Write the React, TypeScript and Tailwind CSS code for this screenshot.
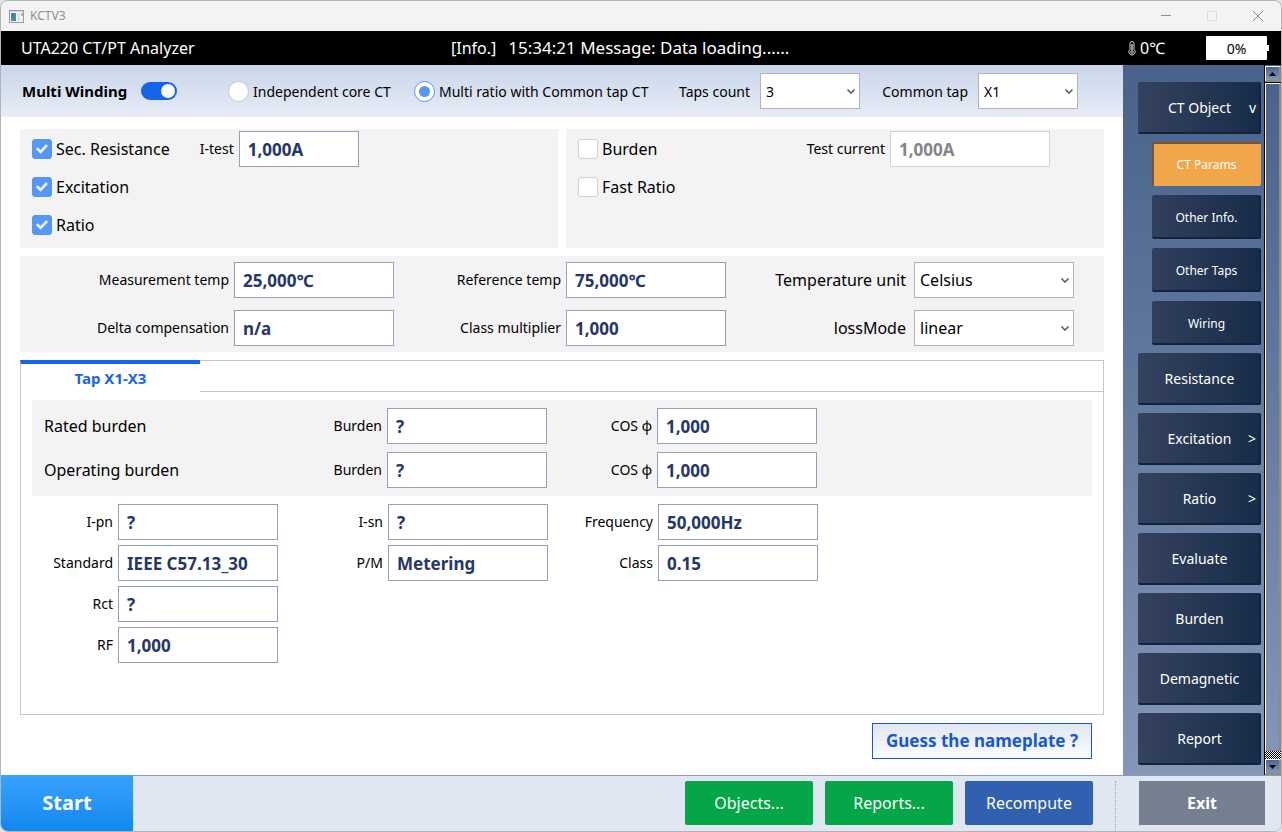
import { useState } from "react";
import clsx from "clsx";

type MenuItem = { label: string; mark?: string; children?: string[] };

const menu: MenuItem[] = [
    { label: "CT Object", mark: "v", children: ["CT Params", "Other Info.", "Other Taps", "Wiring"] },
    { label: "Resistance" },
    { label: "Excitation", mark: ">" },
    { label: "Ratio", mark: ">" },
    { label: "Evaluate" },
    { label: "Burden" },
    { label: "Demagnetic" },
    { label: "Report" },
];

const nameplate = [
    ["I-pn", "?"], ["I-sn", "?"], ["Frequency", "50,000Hz"],
    ["Standard", "IEEE C57.13_30"], ["P/M", "Metering"], ["Class", "0.15"],
    ["Rct", "?"], null, null,
    ["RF", "1,000"], null, null,
];

function Field({ label, value, disabled = false, narrow = false }: {
    label: string,
    value: string,
    disabled?: boolean,
    narrow?: boolean
}) {
    return (
        <label className="flex items-center justify-end gap-[5px] text-[14px] whitespace-nowrap">
            <span className="pb-[2px]">{label}</span>
            <input
                type="text"
                defaultValue={value}
                disabled={disabled}
                className={clsx(
                    "h-9 border bg-white px-2 text-[17px] font-bold",
                    narrow ? "w-[120px]" : "w-40",
                    disabled ? "border-[#d3d5de] text-[#858585]" : "border-[#93a0bb] text-[#24376b]"
                )}
            />
        </label>
    );
}

function Dropdown({ label, options, big = false }: { label: string, options: string[], big?: boolean }) {
    return (
        <label className={clsx("flex items-center justify-end whitespace-nowrap", big ? "gap-2 text-[16px]" : "gap-[10px] text-[14px]")}>
            {label}
            <span className="relative">
                <select className={clsx("block h-9 appearance-none border border-[#b2b2b2] bg-white px-[5px]", big ? "w-40" : "w-[100px]")}>
                    {options.map(o => <option key={o}>{o}</option>)}
                </select>
                <svg className="pointer-events-none absolute top-[15px] right-1 h-2 w-[10px]" viewBox="0 0 10 8" fill="none" stroke="#53657f" strokeWidth="1.7">
                    <path d="M1.5 1.5 L5 5 L8.5 1.5" />
                </svg>
            </span>
        </label>
    );
}

function Check({ label, checked = false }: { label: string, checked?: boolean }) {
    return (
        <label className="flex h-9 items-center gap-1 text-[16px]">
            <span className="relative">
                <input
                    type="checkbox"
                    defaultChecked={checked}
                    className="peer block size-5 appearance-none rounded-[3px] border border-[#cfcfcf] bg-white checked:border-[#5597f7] checked:bg-[#5597f7]"
                />
                <svg className="pointer-events-none absolute inset-0 hidden size-5 peer-checked:block" viewBox="0 0 20 20" fill="none" stroke="#eaf2ff" strokeWidth="2.6">
                    <path d="M4.8 9.2 L8.6 12.8 L15 6" />
                </svg>
            </span>
            {label}
        </label>
    );
}

function Radio({ label, checked = false }: { label: string, checked?: boolean }) {
    return (
        <label className="flex items-center gap-1 text-[14px] whitespace-nowrap">
            <input
                type="radio"
                name="core"
                defaultChecked={checked}
                className="grid size-[21px] appearance-none place-items-center rounded-full border border-[#c6c6c6] bg-white before:size-[11px] before:rounded-full checked:border-[#5597f7] checked:before:bg-[#5597f7]"
            />
            {label}
        </label>
    );
}

function TitleBar() {
    return (
        <div className="flex h-[30px] items-center bg-[#f3f3f3] pl-2 text-[12px] text-[#8f8f8f]">
            <svg className="mr-[6px] h-[13px] w-[15px]" viewBox="0 0 15 13">
                <rect x="0.5" y="0.5" width="14" height="12" fill="#f4f4f4" stroke="#989da3" />
                <rect x="1" y="1" width="13" height="1" fill="#cfd5da" />
                <rect x="2" y="3" width="5" height="8" fill="#4c8f86" />
                <rect x="2" y="3" width="3" height="4" fill="#4a7f9c" />
                <rect x="8" y="3" width="3" height="8" fill="#dfe3e5" />
                <rect x="12" y="3" width="2" height="3" fill="#8fc8a8" />
            </svg>
            KCTV3
            <div className="ml-auto flex gap-9 pr-[18px]">
                <button aria-label="Minimize">
                    <svg className="size-[10px]" viewBox="0 0 10 10" stroke="#8f8f8f"><path d="M0 4.5 H10" /></svg>
                </button>
                <button aria-label="Maximize" disabled>
                    <svg className="size-[10px]" viewBox="0 0 10 10" fill="none" stroke="#dcdcdc"><rect x="0.5" y="0.5" width="9" height="9" /></svg>
                </button>
                <button aria-label="Close">
                    <svg className="size-[10px]" viewBox="0 0 10 10" stroke="#8f8f8f"><path d="M0 0 L10 10 M10 0 L0 10" /></svg>
                </button>
            </div>
        </div>
    );
}

function StatusBar() {
    return (
        <header className="flex h-[34px] items-center bg-black pl-5 text-[16px] text-white">
            <h1 className="w-[430px]">UTA220 CT/PT Analyzer</h1>
            <p className="flex flex-1 items-center gap-3"><span>[Info.]</span><span className="text-[17px]">15:34:21 Message: Data loading......</span></p>
            <div className="flex w-[78px] items-center gap-1">
                <svg className="h-[15px] w-2" viewBox="0 0 8 15" fill="none" stroke="#d5d5d5">
                    <path d="M2 8.3 V2.5 a2 2 0 0 1 4 0 V8.3 a3.2 3.2 0 1 1 -4 0 Z" />
                    <path d="M4 3 V9" strokeWidth="1.4" />
                    <circle cx="4" cy="11" r="1.3" />
                </svg>
                0℃
            </div>
            <div className="flex items-center pr-3">
                <div className="h-6 w-[61px] rounded-[1px] bg-white pt-px text-center text-[14px] leading-6 text-black">0%</div>
                <div className="h-[6px] w-[2px] bg-white" />
            </div>
        </header>
    );
}

function Sidebar() {
    const [active, setActive] = useState("CT Params");

    return (
        <nav className="flex flex-1 flex-col gap-2 pt-[17px] pr-[3px] pb-[10px] pl-[15px] text-white">
            {menu.map(item => (
                <div key={item.label} className="flex flex-col gap-2">
                    <button className="relative h-[52px] rounded-[2px] border-r-2 border-b-2 border-[#14233c] bg-linear-to-r from-[#35425f] to-[#172c49] pl-[2px] text-[14px]">
                        {item.label}
                        {item.mark && <span className="absolute right-[3px]">{item.mark}</span>}
                    </button>
                    {item.children && (
                        <div className="flex flex-col gap-[9px] pl-[14px]">
                            {item.children.map(c => (
                                <button
                                    key={c}
                                    onClick={() => setActive(c)}
                                    className={clsx(
                                        "h-11 rounded-[2px] text-[12px]",
                                        c === active
                                            ? "border-t-2 border-l-2 border-[#80531f] bg-[#f1a64a] pr-[2px]"
                                            : "border-r-2 border-b-2 border-[#14233c] bg-linear-to-r from-[#313f5d] to-[#172c49] pt-1 pl-[2px]"
                                    )}
                                >
                                    {c}
                                </button>
                            ))}
                        </div>
                    )}
                </div>
            ))}
        </nav>
    );
}

function ScrollBar() {
    const btn = "flex h-4 items-center justify-center border-t border-l border-t-white border-l-white border-r-2 border-b-2 border-r-[#8b8b8b] border-b-[#8b8b8b] bg-linear-to-b from-[#4a6690] to-[#8497b8]";
    return (
        <div className="flex w-[17px] flex-col border-l border-black pt-px">
            <button aria-label="Scroll up" className={btn}>
                <svg className="h-1 w-[7px]" viewBox="0 0 7 4"><path d="M0 4 L3.5 0 L7 4 Z" /></svg>
            </button>
            <div className="h-px bg-black" />
            <div className="flex-1 border-t border-l border-r-2 border-b border-t-white border-l-white border-r-[#8b8b8b] border-b-[#8b8b8b]" />
            <div className="h-2 bg-[repeating-conic-gradient(#000_0_25%,#fff_0_50%)] bg-[length:2px_2px]" />
            <button aria-label="Scroll down" className={btn}>
                <svg className="h-1 w-[7px]" viewBox="0 0 7 4"><path d="M0 0 L3.5 4 L7 0 Z" /></svg>
            </button>
        </div>
    );
}

export default function App() {
    return (
        <div className="bg-[#e4e4e4] font-['Noto_Sans',sans-serif] text-black">
            <div className="flex min-h-screen flex-col overflow-hidden rounded-lg border border-[#b4b4b4] bg-white">
                <TitleBar />
                <StatusBar />

                <div className="flex flex-1">
                    <main className="flex flex-1 flex-col">
                        <div className="flex h-[52px] items-center bg-linear-to-b from-[#c8d5ea] to-[#e8edf7] pl-[21px]">
                            <label className="flex w-[206px] items-center gap-[14px] text-[15px] font-bold">
                                Multi Winding
                                <input
                                    type="checkbox"
                                    role="switch"
                                    defaultChecked
                                    className="flex h-[18px] w-9 appearance-none items-center rounded-full bg-gray-400 px-[2px] before:size-[14px] before:rounded-full before:bg-white checked:justify-end checked:bg-[#1764ec]"
                                />
                            </label>
                            <div className="grid grid-cols-[166px_241px_185px_198px] gap-5">
                                <Radio label="Independent core CT" />
                                <Radio label="Multi ratio with Common tap CT" checked />
                                <Dropdown label="Taps count" options={["3", "2", "4", "5"]} />
                                <Dropdown label="Common tap" options={["X1", "X2", "X3"]} />
                            </div>
                        </div>

                        <div className="flex flex-1 flex-col gap-2 px-[19px] pt-3 pb-4">
                            <div className="grid grid-cols-2 gap-2">
                                <section className="flex gap-[30px] bg-[#f3f3f3] pt-[2px] pb-[5px] pl-3">
                                    <div className="flex flex-col gap-[2px]">
                                        <Check label="Sec. Resistance" checked />
                                        <Check label="Excitation" checked />
                                        <Check label="Ratio" checked />
                                    </div>
                                    <div><Field label="I-test" value="1,000A" narrow /></div>
                                </section>
                                <section className="flex justify-between bg-[#f3f3f3] pt-[2px] pr-[54px] pb-[5px] pl-3">
                                    <div className="flex flex-col gap-[2px]">
                                        <Check label="Burden" />
                                        <Check label="Fast Ratio" />
                                    </div>
                                    <div><Field label="Test current" value="1,000A" disabled /></div>
                                </section>
                            </div>

                            <section className="grid grid-cols-[374fr_332fr_348fr] gap-y-3 bg-[#f3f3f3] py-[6px] pr-[30px]">
                                <Field label="Measurement temp" value="25,000℃" />
                                <Field label="Reference temp" value="75,000℃" />
                                <Dropdown label="Temperature unit" options={["Celsius", "Fahrenheit"]} big />
                                <Field label="Delta compensation" value="n/a" />
                                <Field label="Class multiplier" value="1,000" />
                                <Dropdown label="lossMode" options={["linear", "non-linear"]} big />
                            </section>

                            <section className="flex-1 border-x border-b border-[#c6c6c6]">
                                <div className="flex h-8">
                                    <button className="-ml-px w-[180px] border-t-4 border-l border-t-[#1764ec] border-l-[#c6c6c6] text-[15px] font-bold text-[#1764ec]">
                                        Tap X1-X3
                                    </button>
                                    <div className="flex-1 border-y border-[#c6c6c6]" />
                                </div>
                                <div className="mx-[11px] mt-2 flex flex-col gap-2 bg-[#f3f3f3] py-2 pl-3">
                                    {["Rated burden", "Operating burden"].map(name => (
                                        <div key={name} className="grid grid-cols-[233px_270px_270px] items-center text-[16px]">
                                            <span>{name}</span>
                                            <Field label="Burden" value="?" />
                                            <Field label="COS ф" value="1,000" />
                                        </div>
                                    ))}
                                </div>
                                <div className="mt-2 grid grid-cols-[257px_270px_270px] gap-y-[5px]">
                                    {nameplate.map((f, i) => (
                                        f ? <Field key={i} label={f[0]} value={f[1]} /> : <span key={i} />
                                    ))}
                                </div>
                            </section>

                            <button className="mr-3 h-9 w-[220px] self-end border border-[#1658d6] bg-linear-to-b from-[#e1e7f1] to-[#fafbff] text-[17px] font-bold text-[#1658d6]">
                                Guess the nameplate ?
                            </button>
                        </div>
                    </main>

                    <aside className="flex w-[158px] bg-linear-to-b from-[#48628a] to-[#8497b8]">
                        <Sidebar />
                        <ScrollBar />
                    </aside>
                </div>

                <footer className="flex h-14 bg-[#e0e7f1] text-[16px] text-white">
                    <button className="w-[132px] bg-linear-to-b from-[#38a3ff] to-[#0d87f0] text-[20px] font-bold">Start</button>
                    <div className="flex flex-1 items-start justify-end gap-3 border-t border-[#8e9bb8] pt-[5px] pr-4">
                        <button className="h-11 w-32 rounded-[2px] bg-[#04a648]">Objects...</button>
                        <button className="h-11 w-32 rounded-[2px] bg-[#04a648]">Reports...</button>
                        <button className="h-11 w-32 rounded-[2px] bg-[#3160b0]">Recompute</button>
                        <div className="ml-[10px] self-stretch border-l border-dotted border-[#9aa3b5]" />
                        <button className="ml-[11px] h-11 w-[126px] bg-[#757f90] font-bold">Exit</button>
                    </div>
                </footer>
            </div>
        </div>
    );
}
